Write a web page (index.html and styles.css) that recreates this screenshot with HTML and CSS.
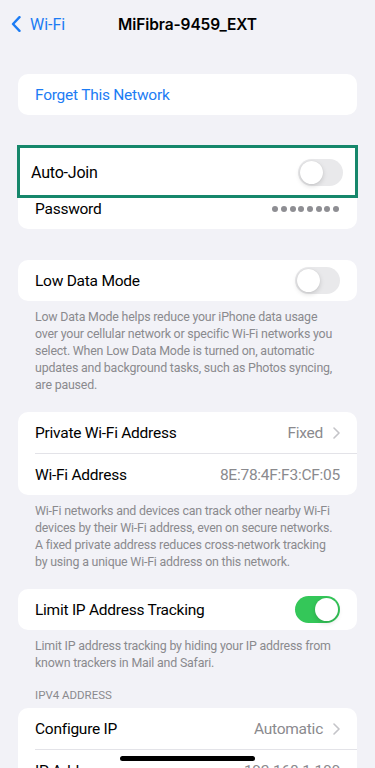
FILE: index.html
```html
<!DOCTYPE html>
<html lang="en">
<head>
<meta charset="utf-8">
<meta name="viewport" content="width=device-width, initial-scale=1">
<title>MiFibra-9459_EXT</title>
<link rel="stylesheet" href="styles.css">
</head>
<body>
<div class="screen">
  <header class="nav">
    <a class="back">
      <svg class="back-icon" width="10" height="16" viewBox="0 0 10 16"><path d="M8.5 1.2 L2 8 L8.5 14.8" fill="none" stroke="#1c7cf4" stroke-width="2.4" stroke-linecap="round" stroke-linejoin="round"/></svg>
      <span>Wi-Fi</span>
    </a>
    <h1 class="title">MiFibra-9459_EXT</h1>
  </header>

  <section class="card card-first">
    <div class="row"><span class="link">Forget This Network</span></div>
  </section>

  <section class="card card-join">
    <div class="row"><span class="label under">Auto-Join</span></div>
    <div class="row"><span class="label">Password</span>
      <span class="dots"><i></i><i></i><i></i><i></i><i></i><i></i><i></i><i></i></span>
    </div>
    <div class="highlight">
      <span class="label hl-label">Auto-Join</span>
      <span class="toggle hl-toggle"><span class="knob"></span></span>
    </div>
  </section>

  <section class="card">
    <div class="row"><span class="label">Low Data Mode</span><span class="toggle"><span class="knob"></span></span></div>
  </section>
  <p class="note">Low Data Mode helps reduce your iPhone data usage over your cellular network or specific Wi-Fi networks you select. When Low Data Mode is turned on, automatic updates and background tasks, such as Photos syncing, are paused.</p>

  <section class="card">
    <div class="row sep"><span class="label">Private Wi-Fi Address</span><span class="value">Fixed<svg class="chev" width="7" height="12" viewBox="0 0 7 12"><path d="M1 1 L6 6 L1 11" fill="none" stroke="#c4c4c8" stroke-width="1.6" stroke-linecap="round" stroke-linejoin="round"/></svg></span></div>
    <div class="row"><span class="label">Wi-Fi Address</span><span class="value plain">8E:78:4F:F3:CF:05</span></div>
  </section>
  <p class="note">Wi-Fi networks and devices can track other nearby Wi-Fi devices by their Wi-Fi address, even on secure networks. A fixed private address reduces cross-network tracking by using a unique Wi-Fi address on this network.</p>

  <section class="card">
    <div class="row"><span class="label">Limit IP Address Tracking</span><span class="toggle on"><span class="knob"></span></span></div>
  </section>
  <p class="note">Limit IP address tracking by hiding your IP address from known trackers in Mail and Safari.</p>

  <h2 class="section-head">IPV4 ADDRESS</h2>
  <section class="card">
    <div class="row sep"><span class="label">Configure IP</span><span class="value">Automatic<svg class="chev" width="7" height="12" viewBox="0 0 7 12"><path d="M1 1 L6 6 L1 11" fill="none" stroke="#c4c4c8" stroke-width="1.6" stroke-linecap="round" stroke-linejoin="round"/></svg></span></div>
    <div class="row"><span class="label">IP Address</span><span class="value plain">192.168.1.100</span></div>
  </section>
</div>
<div class="home-indicator"></div>
</body>
</html>
```

FILE: styles.css
```css
html, body {
  margin: 0;
  padding: 0;
  background: #f2f2f7;
}
body {
  font-family: Roboto, "Noto Sans", sans-serif;
  color: #000;
  height: 768px;
  overflow: hidden;
}
.screen {
  display: flex;
  flex-direction: column;
}
.nav {
  position: relative;
  height: 48px;
  display: flex;
  align-items: center;
  justify-content: center;
}
.back {
  position: absolute;
  left: 11px;
  top: 0;
  height: 48px;
  display: flex;
  align-items: center;
  gap: 9px;
  color: #1c7cf4;
  font-size: 16px;
}
.title {
  margin: 0;
  font-family: Inter, Roboto, sans-serif;
  font-size: 15.5px;
  font-weight: 600;
  letter-spacing: -0.1px;
}
.card {
  position: relative;
  margin: 0 18px;
  background: #fff;
  border-radius: 10px;
  display: flex;
  flex-direction: column;
}
.card-first { margin-top: 26px; }
.card-join { margin-top: 32px; }
.card-join + .card { margin-top: 31px; }
.row {
  height: 41px;
  display: flex;
  align-items: center;
  justify-content: space-between;
  padding: 0 17px;
  font-size: 15.5px;
  letter-spacing: -0.25px;
  position: relative;
}
.label.under { visibility: hidden; }
.row.sep::after {
  content: "";
  position: absolute;
  left: 17px;
  right: 0;
  bottom: -0.5px;
  height: 1px;
  background: #e3e3e8;
}
.row.sep { margin-bottom: 1px; }
.link { color: #1c7cf4; }
.value {
  color: #8a8a8e;
  display: flex;
  align-items: center;
  gap: 10px;
}
.chev { display: block; }
.dots {
  display: flex;
  gap: 2.7px;
  margin-right: 1px;
}
.dots i {
  width: 6px;
  height: 6px;
  border-radius: 50%;
  background: #8e8e93;
}
.toggle {
  width: 45px;
  height: 27px;
  border-radius: 14px;
  background: #e9e9eb;
  position: relative;
  flex: none;
}
.toggle .knob {
  position: absolute;
  top: 2px;
  left: 2px;
  width: 23px;
  height: 23px;
  border-radius: 50%;
  background: #fff;
  box-shadow: 0 2px 5px rgba(0,0,0,0.15), 0 0 1px rgba(0,0,0,0.12);
}
.toggle.on { background: #34c759; }
.toggle.on .knob { left: 20px; }
.highlight {
  position: absolute;
  left: -1px;
  right: -1px;
  top: -2px;
  height: 53px;
  box-sizing: border-box;
  border: 3px solid #16876b;
  background: #fff;
  display: flex;
  align-items: center;
  justify-content: space-between;
  padding: 2px 12px 0 11px;
}
.hl-label { font-size: 16px; letter-spacing: -0.2px; }
.note {
  margin: 0;
  padding: 7px 35px 0 35px;
  font-size: 12.4px;
  letter-spacing: -0.2px;
  line-height: 17px;
  color: #8a8a8e;
}
.note + .card { margin-top: 19px; }
.section-head {
  margin: 17px 0 6px;
  padding: 0 35px;
  font-size: 11.5px;
  line-height: 14px;
  font-weight: 400;
  color: #8a8a8e;
}
.home-indicator {
  position: fixed;
  left: 120px;
  top: 756px;
  width: 135px;
  height: 5px;
  border-radius: 3px;
  background: #000;
}
```
